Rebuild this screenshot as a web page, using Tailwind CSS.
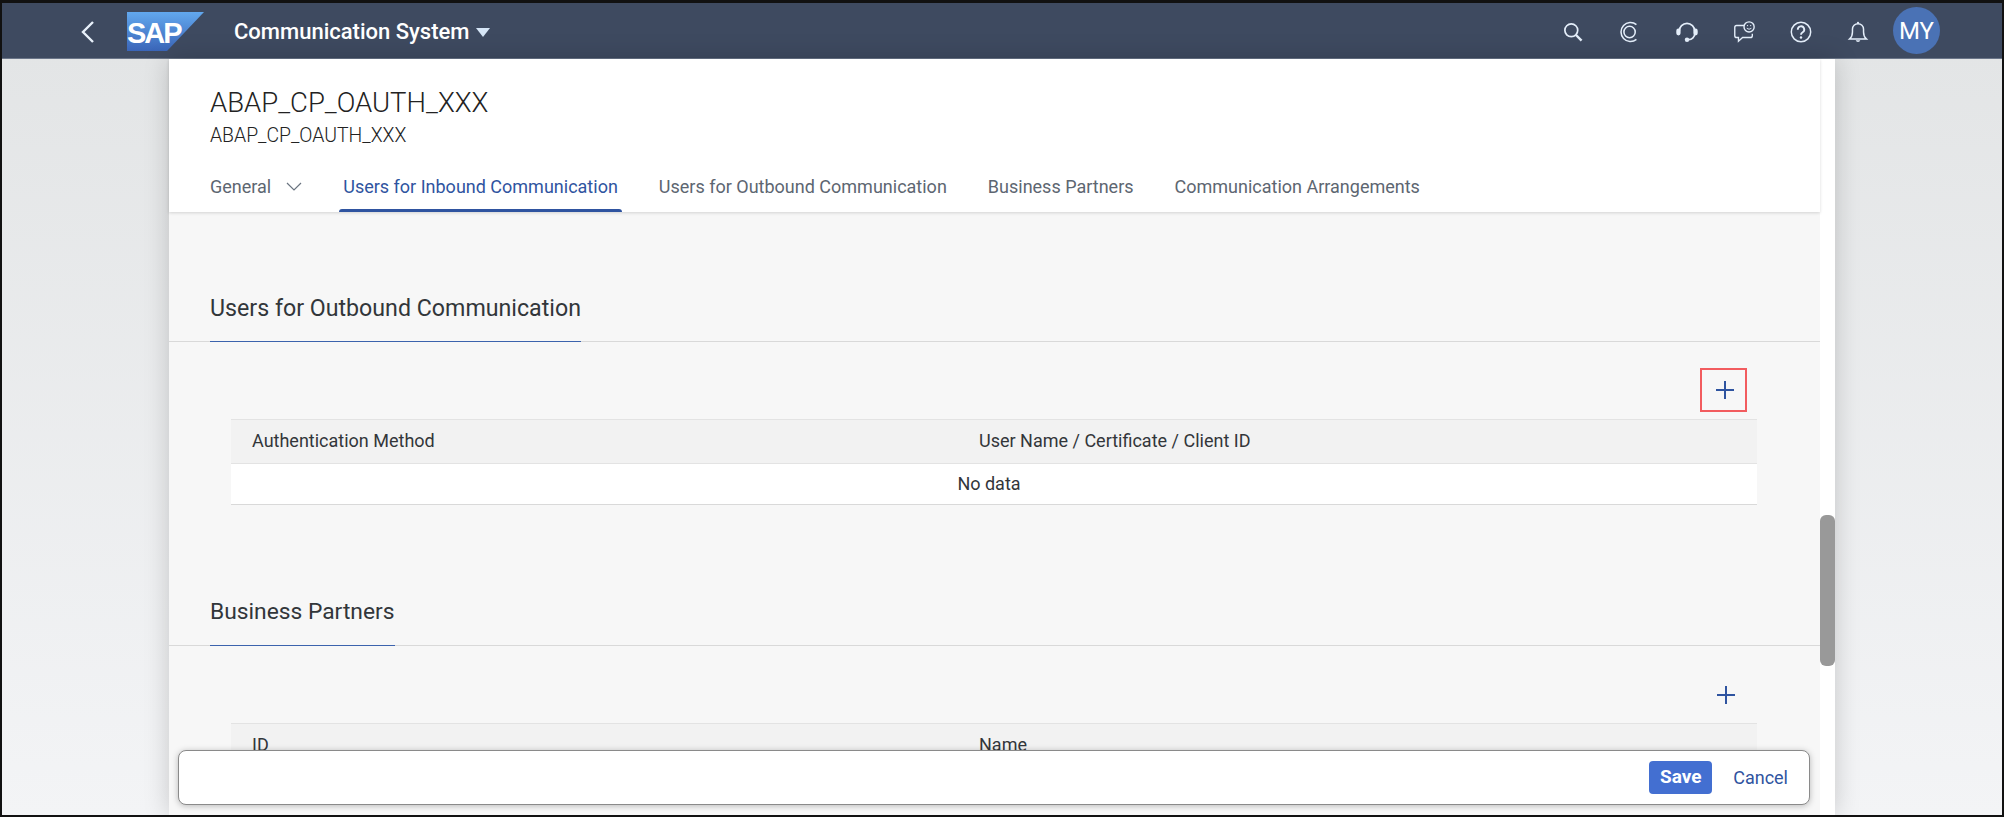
<!DOCTYPE html>
<html lang="en">
<head>
  <meta charset="UTF-8" />
  <title>Communication System</title>
  <script src="https://cdn.jsdelivr.net/npm/@tailwindcss/browser@4"></script>
</head>
<body class="font-['Roboto',sans-serif] text-[#32363a]">
  <div class="relative w-[2004px] h-[817px] flex flex-col overflow-hidden border-x-[2px] border-t-[3px] border-b-[2px] border-[#111] bg-linear-to-b from-[#e2e4e5] to-[#f3f4f6]">

    <header class="h-[56px] shrink-0 flex items-center pt-[3px] bg-[#3e4a60] text-white border-b border-[#6b7689]">
      <svg class="ml-[76px] w-[20px] h-[24px]" viewBox="0 0 20 24" fill="none" stroke="#e8f1fb" stroke-width="2.4"><path d="M15 2 L5 12 L15 22" /></svg>
      <svg class="ml-[29px] w-[78px] h-[40px]" viewBox="0 0 78 40">
        <defs><linearGradient id="sapblue" x1="0" y1="0" x2="0" y2="1"><stop offset="0" stop-color="#62a8ee" /><stop offset="1" stop-color="#3a65b8" /></linearGradient></defs>
        <polygon points="0,0 77,0 40,39 0,39" fill="url(#sapblue)" />
        <text x="0" y="31" fill="#fff" font-family="Liberation Sans" font-size="29" font-weight="700" letter-spacing="-2">SAP</text>
      </svg>
      <span class="ml-[29px] text-[22px] leading-[28px] font-medium">Communication System</span>
      <svg class="ml-[7px] w-[14px] h-[9px]" viewBox="0 0 14 9"><polygon points="0,0 14,0 7,9" fill="#d6e6f7" /></svg>

      <div class="ml-auto mr-[62px] flex items-center">
        <div class="flex items-center gap-[33px] mr-[23px] text-[#e4eefa]">
          <svg class="w-[24px] h-[24px]" viewBox="-2 -2 28 28" fill="none" stroke="currentColor" stroke-width="2"><circle cx="10" cy="10" r="7.5" /><path d="M15.5 15.5 L22 22" stroke-width="2.8" /></svg>
          <svg class="w-[24px] h-[24px]" viewBox="-1 -2 28 28" fill="none" stroke="currentColor" stroke-width="1.8"><path d="M20.5 3.5 A11 11 0 1 0 20.5 20.5" /><circle cx="12.5" cy="12" r="6.6" /></svg>
          <svg class="w-[24px] h-[24px]" viewBox="-2 -2 28 28" fill="none" stroke="currentColor" stroke-width="2"><path d="M3 11 A9 9 0 0 1 21 11 V14 A7 7 0 0 1 14 21" /><rect x="0.5" y="9" width="3" height="6" rx="1.5" fill="currentColor" /><rect x="20.5" y="9" width="3" height="6" rx="1.5" fill="currentColor" /><circle cx="12" cy="21" r="2.6" fill="currentColor" stroke="none" /></svg>
          <svg class="w-[24px] h-[24px]" viewBox="-1 -1 26 26" fill="none" stroke="currentColor" stroke-width="1.5"><path d="M12 5 H4 A2 2 0 0 0 2 7 V16 A2 2 0 0 0 4 18 H6 V22 L10.5 18 H19 A2 2 0 0 0 21 16 V14" /><circle cx="17.5" cy="6.5" r="5.5" /><path d="M15 8 Q17.5 10 20 8" stroke-width="1" /><circle cx="15.8" cy="5" r=".7" fill="currentColor" stroke="none" /><circle cx="19.2" cy="5" r=".7" fill="currentColor" stroke="none" /></svg>
          <svg class="w-[24px] h-[24px]" viewBox="-1 -1 26 26" fill="none" stroke="currentColor" stroke-width="1.6"><circle cx="12" cy="12" r="10.5" /><path d="M8.5 9.5 A3.5 3.5 0 1 1 13.5 12.5 Q12 13.4 12 15" stroke-width="2" /><circle cx="12" cy="18" r="1.3" fill="currentColor" stroke="none" /></svg>
          <svg class="w-[24px] h-[24px]" viewBox="-1 -1 26 26" fill="none" stroke="currentColor" stroke-width="1.6"><path d="M3 19.5 Q6 17 6 12 V9 A6 6 0 0 1 18 9 V12 Q18 17 21 19.5 Z" /><circle cx="12" cy="2.2" r="1.2" fill="currentColor" stroke="none" /><path d="M9.5 21 A2.6 2.6 0 0 0 14.5 21 Z" fill="currentColor" stroke="none" /></svg>
        </div>
        <div class="w-[47px] h-[47px] -mt-[3px] rounded-full bg-[#4a72b5] flex items-center justify-center text-[24px]">MY</div>
      </div>
    </header>

    <div class="flex-1 flex pl-[167px] min-h-0">
      <main class="relative w-[1666px] flex flex-col bg-white shadow-[0_0_24px_rgba(0,0,0,0.18)] min-h-0">
        <div class="h-[153px] shrink-0 relative z-10 flex flex-col bg-white mr-[15px] shadow-[0_1px_3px_rgba(0,0,0,0.15)]">
          <h1 class="ml-[41px] mt-[27px] text-[27.5px] leading-[34px] font-light text-[#222]">ABAP_CP_OAUTH_XXX</h1>
          <p class="ml-[41px] mt-[5px] text-[19.4px] leading-[22px] font-light text-[#222]">ABAP_CP_OAUTH_XXX</p>
          <nav class="mt-auto ml-[41px] flex gap-[41px] text-[18px] text-[#5d6671]">
            <a class="flex items-center h-[46px] pb-[5px] gap-[15px]">General
              <svg class="w-[16px] h-[9px]" viewBox="0 0 16 9" fill="none" stroke="#6a7480" stroke-width="1.2"><path d="M1 1 L8 8 L15 1" /></svg>
            </a>
            <a class="flex items-center h-[46px] pb-[5px] text-[#2f54a0] relative">Users for Inbound Communication
              <span class="absolute -left-[4px] -right-[4px] bottom-0 h-[3px] rounded-t-sm bg-[#2f54a0]"></span>
            </a>
            <a class="flex items-center h-[46px] pb-[5px]">Users for Outbound Communication</a>
            <a class="flex items-center h-[46px] pb-[5px]">Business Partners</a>
            <a class="flex items-center h-[46px] pb-[5px]">Communication Arrangements</a>
          </nav>
        </div>

        <div class="flex-1 flex min-h-0">
          <div class="w-[1651px] bg-[#f7f7f7] overflow-hidden">
            <section class="mt-[76px]">
              <div class="border-b border-[#d9d9d9] h-[54px] px-[41px]">
                <h2 class="inline-block h-[54px] leading-[40px] text-[23.2px] border-b border-[#3c63ad]">Users for Outbound Communication</h2>
              </div>
              <div class="h-[77px] flex items-end justify-end pr-[73px] pb-[7px]">
                <div class="w-[47px] h-[44px] pl-[2px] flex items-center justify-center border-2 border-[#f25c5f]">
                  <svg class="w-[20px] h-[20px]" viewBox="0 0 20 20" stroke="#2f54a0" stroke-width="2"><path d="M10 1 V19 M1 10 H19" /></svg>
                </div>
              </div>
              <div class="mx-[62px] w-[1526px] text-[18px]">
                <div class="h-[45px] pb-[2px] flex items-center bg-[#f2f2f2] border-y border-[#e3e3e3] pl-[21px]">
                  <span class="w-[727px]">Authentication Method</span><span>User Name / Certificate / Client ID</span>
                </div>
                <div class="h-[41px] pb-[2px] flex items-center justify-center bg-white border-b border-[#d9d9d9] pr-[10px]">No data</div>
              </div>
            </section>

            <section class="mt-[87px]">
              <div class="border-b border-[#d9d9d9] h-[54px] px-[41px]">
                <h2 class="inline-block h-[54px] leading-[40px] text-[22.8px] border-b border-[#3c63ad]">Business Partners</h2>
              </div>
              <div class="h-[77px] flex items-end justify-end pr-[84px] pb-[18px]">
                <svg class="w-[20px] h-[20px]" viewBox="0 0 20 20" stroke="#2f54a0" stroke-width="2"><path d="M10 1 V19 M1 10 H19" /></svg>
              </div>
              <div class="mx-[62px] w-[1526px] text-[18px]">
                <div class="h-[45px] pb-[2px] flex items-center bg-[#f2f2f2] border-y border-[#e3e3e3] pl-[21px]">
                  <span class="w-[727px]">ID</span><span>Name</span>
                </div>
              </div>
            </section>
          </div>
          <div class="relative w-[15px] bg-white">
            <div class="absolute left-0 top-[303px] w-[15px] h-[151px] rounded-md bg-[#999]"></div>
          </div>
        </div>

        <!-- floating action bar -->
        <div class="absolute left-[9px] right-[25px] bottom-[10px] h-[55px] flex items-center justify-end gap-[21px] pr-[21px] bg-white border border-[#8a8a8a] rounded-lg shadow-[0_1px_6px_rgba(0,0,0,0.25)] text-[18px]">
          <button class="h-[33px] w-[63px] rounded-[4px] bg-[#436fd1] text-white font-bold text-[19px]">Save</button>
          <button class="text-[#2f54a0]">Cancel</button>
        </div>
      </main>
    </div>
  </div>
</body>
</html>
